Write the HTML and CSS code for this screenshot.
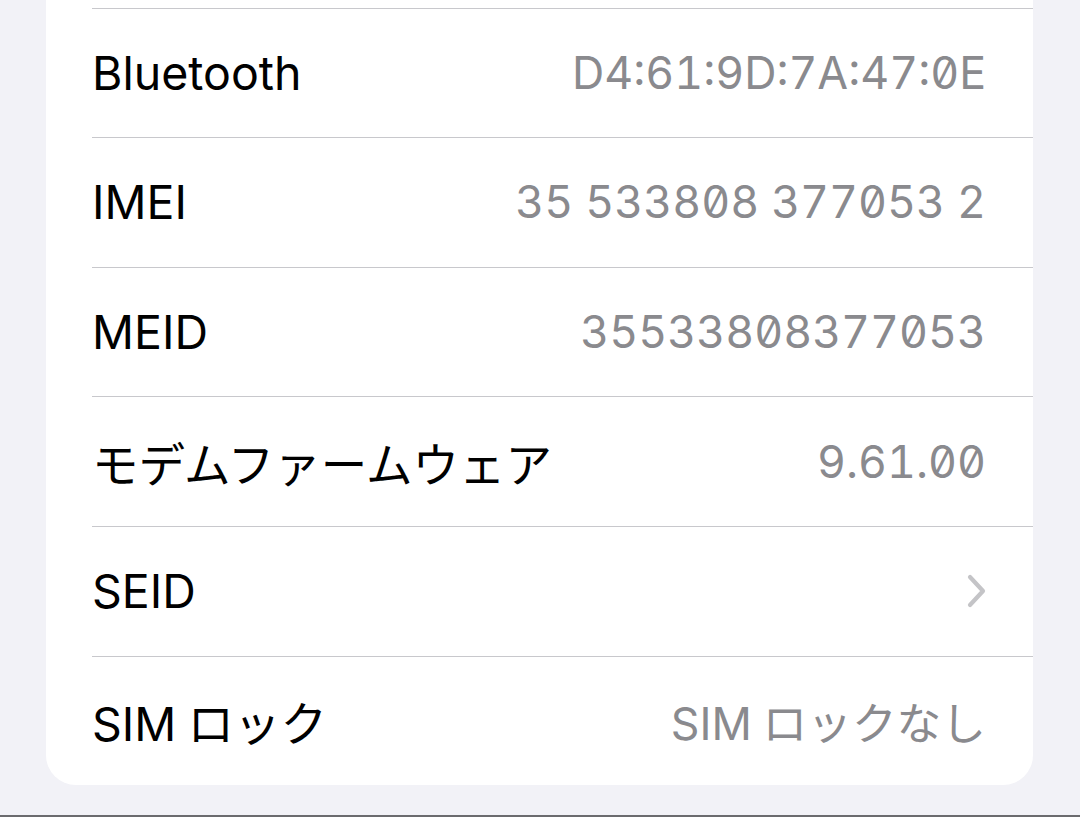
FILE: index.html
```html
<!DOCTYPE html>
<html>
<head>
    <title>情報</title>
    <link rel="stylesheet" href="styles.css">
</head>
<body>
    <div class="screen">
        <div class="group">
            <div class="row">
                <span class="label">Wi-Fiアドレス</span>
                <span class="value">D4:61:9D:7A:47:0F</span>
            </div>
            <div class="row">
                <span class="label">Bluetooth</span>
                <span class="value">D4:61:9D:7A:47:0E</span>
            </div>
            <div class="row">
                <span class="label">IMEI</span>
                <span class="value">35 533808 377053 2</span>
            </div>
            <div class="row">
                <span class="label">MEID</span>
                <span class="value">35533808377053</span>
            </div>
            <div class="row">
                <span class="label">モデムファームウェア</span>
                <span class="value">9.61.00</span>
            </div>
            <div class="row">
                <span class="label">SEID</span>
                <svg class="chevron" width="22" height="36" viewBox="0 0 22 36">
                    <path d="M4 4 L17 18 L4 32" fill="none" stroke="#c4c4c7" stroke-width="4.2" stroke-linecap="round" stroke-linejoin="round"/>
                </svg>
            </div>
            <div class="row">
                <span class="label"><span class="latin">SIM</span>ロック</span>
                <span class="value"><span class="latin">SIM</span>ロックなし</span>
            </div>
        </div>
    </div>
</body>
</html>
```
FILE: styles.css
```css
html, body {
    margin: 0;
    padding: 0;
    overflow: hidden;
}

body {
    width: 1080px;
    height: 817px;
    background-color: #f2f2f7;
    font-family: Inter, "Noto Sans CJK JP", sans-serif;
    -webkit-font-smoothing: antialiased;
}

.screen {
    height: 815px;
    overflow: hidden;
    border-bottom: 2px solid #6b6b6e;
}

.group {
    margin: -122px 47px 0 46px;
    background-color: #ffffff;
    border-radius: 0 0 30px 30px;
}

.row {
    display: flex;
    align-items: center;
    justify-content: space-between;
    height: 129.6px;
    margin-left: 46px;
    padding-right: 47px;
    box-sizing: border-box;
    border-top: 1.5px solid #c8c8cc;
}

.row:first-child {
    border-top: none;
}

.label {
    font-size: 46.5px;
    color: #000000;
}

.value {
    font-size: 44.7px;
    color: #8a8a8e;
    font-feature-settings: "zero" 1, "tnum" 1;
}

.latin {
    margin-right: 0.24em;
}

.chevron {
    margin-right: -2px;
}
```
